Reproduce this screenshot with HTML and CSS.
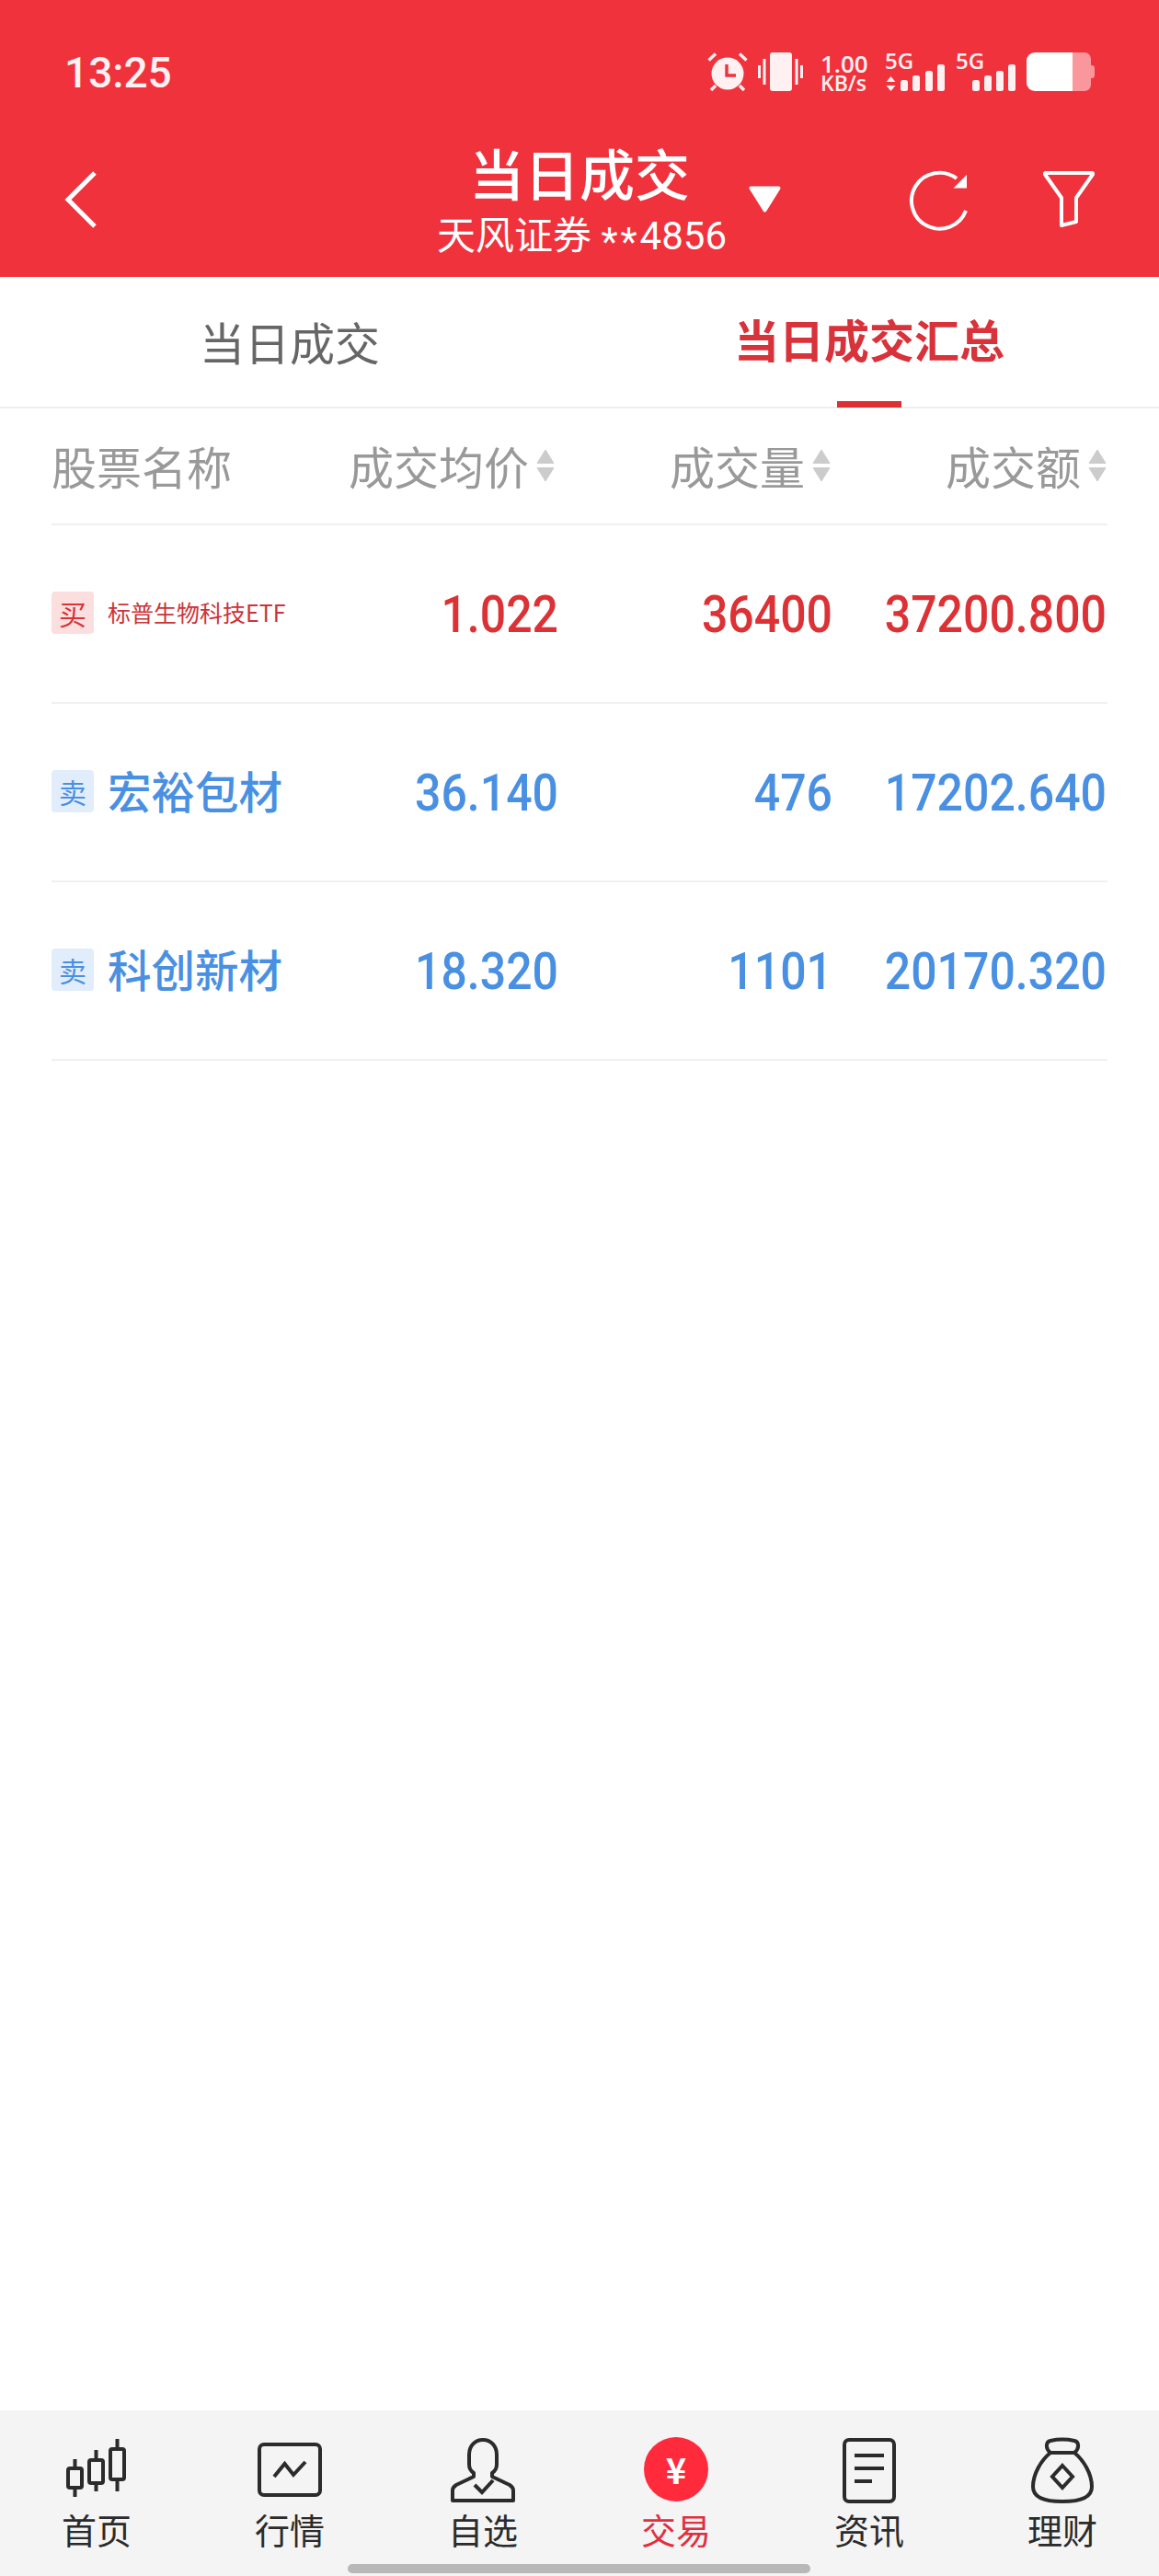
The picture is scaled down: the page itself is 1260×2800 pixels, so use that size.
FILE: index.html
```html
<!DOCTYPE html>
<html lang="zh-CN">
<head>
<meta charset="utf-8">
<title>当日成交</title>
<link rel="stylesheet" href="styles.css">
</head>
<body>
<div class="page">
  <header class="top">
    <div class="status">
      <span class="clock">13:25</span>
      <div class="status-icons">
        <svg class="ic-alarm" width="44" height="42" viewBox="0 0 44 42">
          <circle cx="22" cy="23" r="17.5" fill="#fff0f1"/>
          <path d="M21 13v12h10" fill="none" stroke="#f0323c" stroke-width="3.4"/>
          <path d="M1.5 8.500 9 1.500M42.500 8.500 35 1.500M4 41l5-5M40 41l-5-5" stroke="#fff0f1" stroke-width="3.4" fill="none"/>
        </svg>
        <svg class="ic-vibrate" width="49" height="42" viewBox="0 0 49 42">
          <rect x="13" y="0" width="24" height="42" rx="3" fill="#fff0f1"/>
          <path d="M1.500 14v14M7 7v28M42 7v28M47.500 14v14" stroke="#fff0f1" stroke-width="3" fill="none"/>
        </svg>
        <div class="speed"><span class="speed-num">1.00</span><span class="speed-unit">KB/s</span></div>
        <svg class="ic-signal" width="65" height="42" viewBox="0 0 65 42">
          <text class="sig-label" x="0" y="18">5G</text>
          <path d="M6.500 26l5 6h-10zM6.500 42l5-6h-10z" fill="#fff0f1"/>
          <rect x="17" y="30" width="8" height="12" rx="2.500" fill="#fff0f1"/>
          <rect x="30" y="25" width="8" height="17" rx="2.500" fill="#fff0f1"/>
          <rect x="44" y="20" width="8" height="22" rx="2.500" fill="#fff0f1"/>
          <rect x="57" y="13" width="8" height="29" rx="2.500" fill="#fff0f1"/>
        </svg>
        <svg class="ic-signal-b" width="65" height="42" viewBox="0 0 65 42">
          <text class="sig-label" x="0" y="18">5G</text>
          <rect x="18" y="30" width="8" height="12" rx="2.500" fill="#fff0f1"/>
          <rect x="31" y="25" width="8" height="17" rx="2.500" fill="#fff0f1"/>
          <rect x="44" y="20" width="8" height="22" rx="2.500" fill="#fff0f1"/>
          <rect x="57" y="13" width="8" height="29" rx="2.500" fill="#fff0f1"/>
        </svg>
        <svg class="ic-battery" width="74" height="42" viewBox="0 0 74 42">
          <path d="M50 0H63a7 7 0 0 1 7 7v7h1a3 3 0 0 1 3 3v8a3 3 0 0 1-3 3h-1v7a7 7 0 0 1-7 7H50z" fill="#fa979c"/>
          <path d="M50 0H9a9 9 0 0 0-9 9v24a9 9 0 0 0 9 9H50z" fill="#fff"/>
        </svg>
      </div>
    </div>
    <div class="titlebar">
      <div class="title-left">
        <svg width="35" height="62" viewBox="0 0 35 62"><path d="M33 2 4 31l29 29" fill="none" stroke="#fff" stroke-width="5"/></svg>
      </div>
      <div class="title-center">
        <div class="title">当日成交</div>
        <div class="account">天风证券 <span class="stars">**</span>4856</div>
      </div>
      <div class="title-right">
        <svg class="caret" width="35" height="29" viewBox="0 0 35 29"><path d="M2.500 2.500h30L17.500 26.500z" fill="#fff" stroke="#fff" stroke-width="4" stroke-linejoin="round"/></svg>
        <svg class="refresh" width="66" height="68" viewBox="0 0 66 68">
          <path d="M62 46A30.500 30.500 0 1 1 52 11" fill="none" stroke="#fff" stroke-width="4"/>
          <path d="M63 7v14.500H48.500z" fill="#fff"/>
        </svg>
        <svg class="filter" width="56" height="63" viewBox="0 0 56 63">
          <path d="M3 3h50a1 1 0 0 1 1 1.500L36 30v26l-16 4V30L2 4.500A1 1 0 0 1 3 3z" fill="none" stroke="#fff" stroke-width="4" stroke-linejoin="round"/>
        </svg>
      </div>
    </div>
  </header>

  <nav class="tabs">
    <div class="tab">当日成交</div>
    <div class="tab tab-on">当日成交汇总</div>
  </nav>

  <main class="table">
    <div class="row-head">
      <div class="hcell-name">股票名称</div>
      <div class="hcell">成交均价<svg class="sort" width="20" height="36" viewBox="0 0 20 36"><path d="M10 1 19 15.500H1zM10 35 19 20.500H1z" fill="#ccc" stroke="#ccc" stroke-linejoin="round"/></svg></div>
      <div class="hcell">成交量<svg class="sort" width="20" height="36" viewBox="0 0 20 36"><path d="M10 1 19 15.500H1zM10 35 19 20.500H1z" fill="#ccc" stroke="#ccc" stroke-linejoin="round"/></svg></div>
      <div class="hcell">成交额<svg class="sort" width="20" height="36" viewBox="0 0 20 36"><path d="M10 1 19 15.500H1zM10 35 19 20.500H1z" fill="#ccc" stroke="#ccc" stroke-linejoin="round"/></svg></div>
    </div>

    <div class="row row-buy">
      <div class="name"><span class="badge">买</span><span class="stock stock-small">标普生物科技ETF</span></div>
      <div class="num"><span>1.022</span></div>
      <div class="num"><span>36400</span></div>
      <div class="num"><span>37200.800</span></div>
    </div>
    <div class="row row-sell">
      <div class="name"><span class="badge">卖</span><span class="stock">宏裕包材</span></div>
      <div class="num"><span>36.140</span></div>
      <div class="num"><span>476</span></div>
      <div class="num"><span>17202.640</span></div>
    </div>
    <div class="row row-sell">
      <div class="name"><span class="badge">卖</span><span class="stock">科创新材</span></div>
      <div class="num"><span>18.320</span></div>
      <div class="num"><span>1101</span></div>
      <div class="num"><span>20170.320</span></div>
    </div>
  </main>

  <footer class="bottom">
    <div class="nav-item">
      <svg width="70" height="70" viewBox="0 0 70 70">
        <g fill="none" stroke="#2b2b2b" stroke-width="4">
          <rect x="4" y="33" width="15" height="21" rx="2"/><path d="M11.500 23v10M11.500 54v10"/>
          <rect x="27" y="24" width="15" height="25" rx="2"/><path d="M34.500 13v11M34.500 49v9"/>
          <rect x="50" y="12" width="15" height="33" rx="2"/><path d="M57.500 1v11M57.500 45v13"/>
        </g>
      </svg>
      <span>首页</span>
    </div>
    <div class="nav-item">
      <svg width="70" height="70" viewBox="0 0 70 70">
        <rect x="2" y="7" width="66" height="55" rx="5" fill="none" stroke="#2b2b2b" stroke-width="4"/>
        <path d="M18 42 29.500 28 39 40 52 26" fill="none" stroke="#2b2b2b" stroke-width="4"/>
      </svg>
      <span>行情</span>
    </div>
    <div class="nav-item">
      <svg width="70" height="70" viewBox="0 0 70 70">
        <path d="M35 2C26 2 20 9 20 18v11c0 4 2 7 5 9v4L6 51c-3 2-4 3-4 6v11h66V57c0-3-1-4-4-6L45 42v-4c3-2 5-5 5-9V18C50 9 44 2 35 2z" fill="none" stroke="#2b2b2b" stroke-width="4" stroke-linejoin="round"/>
        <path d="M26 51l8 8 12-13" fill="none" stroke="#2b2b2b" stroke-width="4"/>
      </svg>
      <span>自选</span>
    </div>
    <div class="nav-item nav-on">
      <div class="yuan">¥</div>
      <span>交易</span>
    </div>
    <div class="nav-item">
      <svg width="70" height="70" viewBox="0 0 70 70">
        <rect x="8" y="2" width="54" height="67" rx="5" fill="none" stroke="#2b2b2b" stroke-width="4"/>
        <path d="M19 19h32M19 33h32M19 47h19" fill="none" stroke="#2b2b2b" stroke-width="4"/>
      </svg>
      <span>资讯</span>
    </div>
    <div class="nav-item">
      <svg width="70" height="72" viewBox="0 0 70 72">
        <path d="M22 17C16 12 17 5 22 4c9-2 17-2 26 0 5 1 6 8 0 13" fill="none" stroke="#2b2b2b" stroke-width="4"/>
        <path d="M22 17h26c10 8 19 23 19 37 0 12-13 16-32 16S3 66 3 54c0-14 9-29 19-37z" fill="none" stroke="#2b2b2b" stroke-width="4"/>
        <path d="M35 31 46 43 35 55 24 43z" fill="none" stroke="#2b2b2b" stroke-width="4"/>
      </svg>
      <span>理财</span>
    </div>
    <div class="home-bar"></div>
  </footer>
</div>
</body>
</html>
```

FILE: styles.css
```css
* { box-sizing: border-box; }

html, body {
  margin: 0;
  padding: 0;
  background: #fff;
}

body {
  font-family: "Noto Sans CJK SC", Roboto, sans-serif;
}

.page {
  height: 2800px;
  display: flex;
  flex-direction: column;
}

/* Red header: status bar plus title row */
.top {
  height: 301px;
  background: #f0323c;
  color: #fff;
  flex: none;
}

.status {
  height: 144px;
  padding: 57px 70px 0 70px;
  display: flex;
  justify-content: space-between;
  align-items: flex-start;
}

.clock {
  font: 500 46px/44px Roboto, sans-serif;
  color: #fff0f1;
}

.status-icons {
  display: flex;
  align-items: flex-start;
  height: 42px;
}

.status-icons svg { overflow: visible; }

.ic-vibrate { margin-left: 11px; }
.ic-signal { margin-left: 19px; }
.ic-signal-b { margin-left: 12px; }
.ic-battery { margin-left: 12px; }

.speed {
  margin-left: 19px;
  width: 51px;
  display: flex;
  flex-direction: column;
  font-family: "Open Sans", sans-serif;
  font-weight: 600;
  color: #fff0f1;
  white-space: nowrap;
}

.speed-num { font-size: 26px; line-height: 24px; }
.speed-unit { font-size: 23px; line-height: 18px; }

.sig-label {
  font: 600 24px "Open Sans", sans-serif;
  fill: #fff0f1;
}

.titlebar {
  height: 157px;
  display: grid;
  grid-template-columns: 1fr auto 1fr;
  align-items: start;
}

.title-left { padding: 42px 0 0 70px; }

.title-center {
  width: 310px;
  text-align: center;
}

.title {
  font-size: 60px;
  line-height: 76px;
  font-weight: 500;
  margin-top: 5px;
}

.account {
  font-size: 42px;
  line-height: 50px;
  margin-top: 7px;
  white-space: nowrap;
  font-family: Roboto, "Noto Sans CJK SC", sans-serif;
}

.stars {
  position: relative;
  top: 6px;
  letter-spacing: 3px;
}

.title-right {
  display: flex;
  align-items: flex-start;
  padding-right: 70px;
}

.caret { margin: 58px 0 0 29px; }
.refresh { margin: 39px 0 0 auto; }
.filter { margin: 41px 0 0 80px; }

/* Tab strip */
.tabs {
  height: 143px;
  flex: none;
  display: grid;
  grid-template-columns: 630px 630px;
  border-bottom: 2px solid #eeeeee;
}

.tab {
  font-size: 49px;
  line-height: 140px;
  color: #666;
  text-align: center;
}

.tab-on {
  position: relative;
  color: #d8323a;
  font-weight: 700;
  line-height: 134px;
}

.tab-on::after {
  content: "";
  position: absolute;
  left: 280px;
  bottom: -1px;
  width: 70px;
  height: 7px;
  background: #dc3035;
}

/* Trade table */
.table {
  flex: 1;
  padding: 0 56px;
}

.row-head,
.row {
  display: grid;
  grid-template-columns: 251px 300px 298px 299px;
  align-items: center;
  border-bottom: 2px solid #f0f0f0;
}

.row-head {
  height: 127px;
  padding-bottom: 2px;
  font-size: 49px;
  color: #999;
}

.hcell {
  display: flex;
  justify-content: flex-end;
  align-items: center;
  gap: 8px;
  padding-right: 4px;
}

.hcell + .hcell { padding-right: 2px; }
.hcell + .hcell + .hcell { padding-right: 1px; }

.row { height: 194px; }

.name {
  display: flex;
  align-items: center;
  gap: 15px;
  white-space: nowrap;
  margin-top: -2px;
}

.badge {
  width: 46px;
  height: 46px;
  flex: none;
  border-radius: 4px;
  font-size: 30px;
  line-height: 46px;
  text-align: center;
}

.stock {
  font-size: 47.500px;
  line-height: 60px;
  font-weight: 500;
  margin-top: -2px;
}

.stock-small {
  font-size: 25px;
  font-weight: 400;
  color: #cc3338;
}

.num {
  text-align: right;
  font: 500 50px/60px Roboto, sans-serif;
  padding-top: 2px;
}

.num span {
  display: inline-block;
  transform: scaleY(1.1);
}

.num:last-child { padding-right: 1px; }

.row-buy { color: #dc3236; }
.row-buy .badge { background: #fbdfdf; color: #d8323a; }
.row-sell { color: #4a90e2; }
.row-sell .badge { background: #e1edfb; color: #4a90e2; }

/* Bottom navigation */
.bottom {
  position: relative;
  height: 180px;
  flex: none;
  background: #f4f4f4;
  display: grid;
  grid-template-columns: repeat(6, 210px);
  padding-top: 29px;
}

.nav-item {
  display: flex;
  flex-direction: column;
  align-items: center;
  font-size: 38px;
  line-height: 48px;
  color: #2b2b2b;
  height: 130px;
}

.nav-item svg {
  display: block;
  height: 72px;
  flex: none;
}

.nav-item span { margin-top: 4px; }

.nav-on { color: #e0303f; }

.yuan {
  width: 70px;
  height: 70px;
  flex: none;
  margin-bottom: 2px;
  border-radius: 50%;
  background: #ff2a3c;
  color: #fff;
  font: 700 38px/70px "Noto Sans CJK SC", sans-serif;
  text-align: center;
}

.home-bar {
  position: absolute;
  left: 378px;
  bottom: 3px;
  width: 503px;
  height: 10px;
  border-radius: 5px;
  background: #b8b8b8;
}
```
